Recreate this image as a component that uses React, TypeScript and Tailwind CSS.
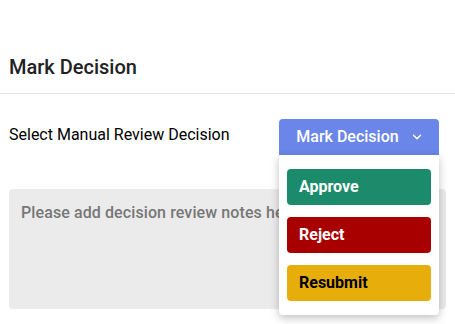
import { ChevronDown } from "lucide-react";

const options = [
  { label: "Approve", cls: "bg-[#1b8b6b] text-white" },
  { label: "Reject", cls: "bg-[#a80000] text-white" },
  { label: "Resubmit", cls: "bg-[#e6ad0b] text-black" },
];

export default function App() {
  return (
    <div className="w-[455px] h-[324px] bg-white font-['Roboto',sans-serif] overflow-hidden">
      <div className="px-[9px] pt-[53px] pb-[11px] border-b border-[#e6e6e6]">
        <h1 className="text-[20px] leading-[29px] font-medium text-[#222]">Mark Decision</h1>
      </div>

      <div className="px-[9px] pt-[25px]">
        <div className="flex items-center justify-between pr-[7px]">
          <span className="text-[16px] text-black -mt-[4px]">Select Manual Review Decision</span>
          <div className="relative z-10">
            <button className="w-[160px] h-[36px] rounded-t-[4px] bg-[#6a86e8] text-white text-[16px] font-medium flex items-center justify-center gap-[11px] pl-[2px]">
              Mark Decision
              <ChevronDown size={14} strokeWidth={2.5} />
            </button>
            <div className="absolute left-0 top-[36px] w-[160px] bg-white rounded-b-[4px] shadow-[0_3px_8px_rgba(0,0,0,0.25)] px-[8px] pt-[14px] pb-[14px] flex flex-col gap-[12px]">
              {options.map((o) => (
                <div key={o.label} className={`h-[36px] rounded-[4px] flex items-center px-[12px] text-[16px] font-bold ${o.cls}`}>
                  {o.label}
                </div>
              ))}
            </div>
          </div>
        </div>

        <div className="mt-[34px] h-[120px] rounded-[4px] bg-[#ebebeb] px-[12px] pt-[12px]">
          <p className="text-[16px] font-medium tracking-[0.1px] text-[#777]">Please add decision review notes here</p>
        </div>
      </div>
    </div>
  );
}
